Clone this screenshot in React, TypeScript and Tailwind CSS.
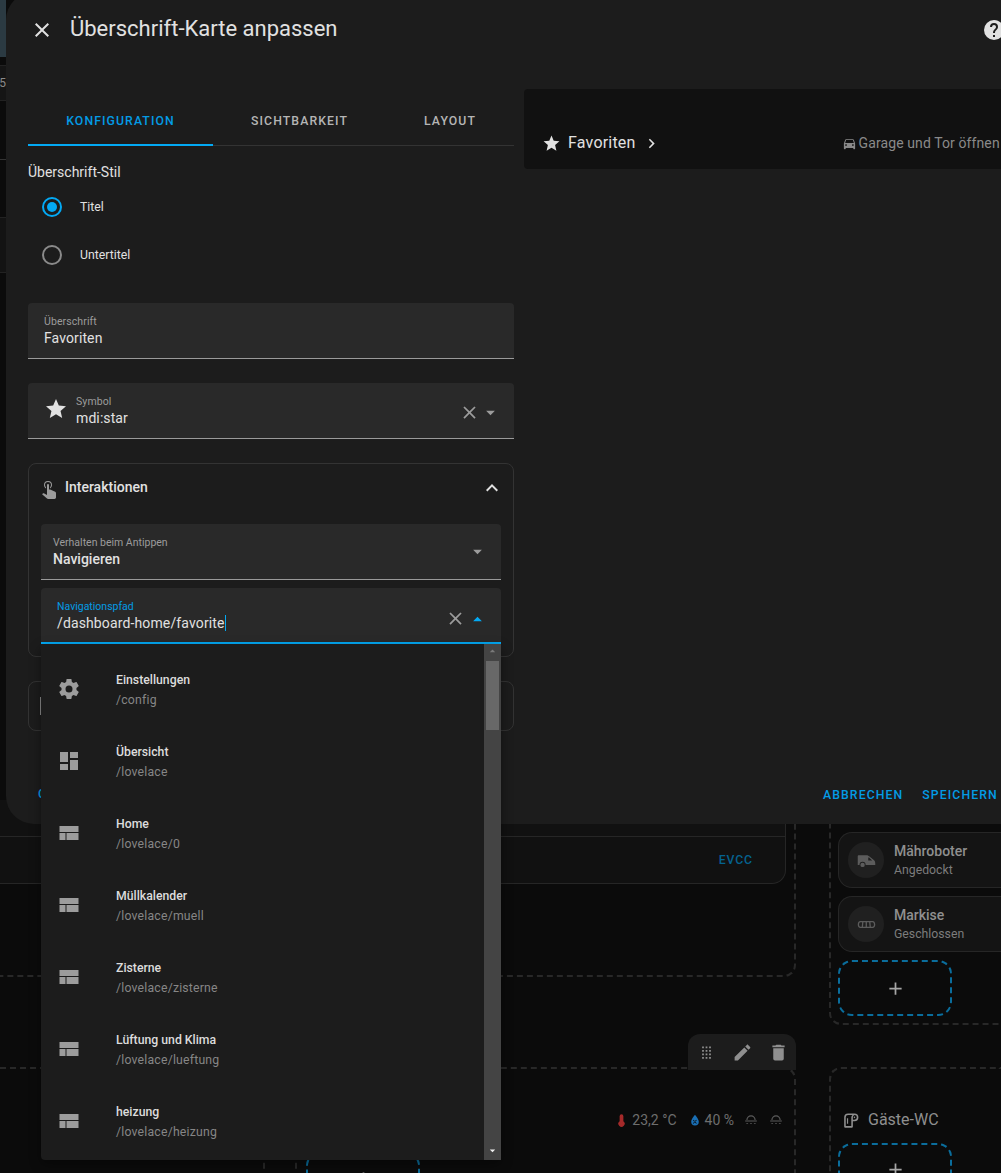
const path = {
  close: "M19,6.41L17.59,5L12,10.59L6.41,5L5,6.41L10.59,12L5,17.59L6.41,19L12,13.41L17.59,19L19,17.59L13.41,12L19,6.41Z",
  help: "M15.07,11.25L14.17,12.17C13.45,12.89 13,13.5 13,15H11V14.5C11,13.39 11.45,12.39 12.17,11.67L13.41,10.41C13.78,10.05 14,9.55 14,9C14,7.89 13.1,7 12,7A2,2 0 0,0 10,9H8A4,4 0 0,1 12,5A4,4 0 0,1 16,9C16,9.88 15.64,10.67 15.07,11.25M13,19H11V17H13M12,2A10,10 0 0,0 2,12A10,10 0 0,0 12,22A10,10 0 0,0 22,12C22,6.47 17.5,2 12,2Z",
  star: "M12,17.27L18.18,21L16.54,13.97L22,9.24L14.81,8.62L12,2L9.19,8.62L2,9.24L7.45,13.97L5.82,21L12,17.27Z",
  chevronRight: "M8.59,16.58L13.17,12L8.59,7.41L10,6L16,12L10,18L8.59,16.58Z",
  chevronUp: "M7.41,15.41L12,10.83L16.59,15.41L18,14L12,8L6,14L7.41,15.41Z",
  menuDown: "M7,10L12,15L17,10H7Z",
  menuUp: "M7,15L12,10L17,15H7Z",
  car: "M18.92 6.01C18.72 5.42 18.16 5 17.5 5h-11c-.66 0-1.21.42-1.42 1.01L3 12v8c0 .55.45 1 1 1h1c.55 0 1-.45 1-1v-1h12v1c0 .55.45 1 1 1h1c.55 0 1-.45 1-1v-8l-2.08-5.99zM6.5 16c-.83 0-1.5-.67-1.5-1.5S5.67 13 6.5 13s1.5.67 1.5 1.5S7.33 16 6.5 16zm11 0c-.83 0-1.5-.67-1.5-1.5s.67-1.5 1.5-1.5 1.5.67 1.5 1.5-.67 1.5-1.5 1.5zM5 11l1.5-4.5h11L19 11H5z",
  tap: "M10,9A1,1 0 0,1 11,8A1,1 0 0,1 12,9V13.47L13.21,13.6L18.15,15.79C18.68,16.03 19,16.56 19,17.14V21.5C18.97,22.32 18.32,22.97 17.5,23H11C10.62,23 10.26,22.85 10,22.57L5.1,18.37L5.84,17.6C6.03,17.39 6.3,17.28 6.58,17.28H6.8L10,19V9M11,5A4,4 0 0,1 15,9C15,10.5 14.2,11.77 13,12.46V11.24C13.61,10.69 14,9.89 14,9A3,3 0 0,0 11,6A3,3 0 0,0 8,9C8,9.89 8.39,10.69 9,11.24V12.46C7.8,11.77 7,10.5 7,9A4,4 0 0,1 11,5Z",
  cog: "M12,15.5A3.5,3.5 0 0,1 8.5,12A3.5,3.5 0 0,1 12,8.5A3.5,3.5 0 0,1 15.5,12A3.5,3.5 0 0,1 12,15.5M19.43,12.97C19.47,12.65 19.5,12.33 19.5,12C19.5,11.67 19.47,11.34 19.43,11L21.54,9.37C21.73,9.22 21.78,8.95 21.66,8.73L19.66,5.27C19.54,5.05 19.27,4.96 19.05,5.05L16.56,6.05C16.04,5.66 15.5,5.32 14.87,5.07L14.5,2.42C14.46,2.18 14.25,2 14,2H10C9.75,2 9.54,2.18 9.5,2.42L9.13,5.07C8.5,5.32 7.96,5.66 7.44,6.05L4.95,5.05C4.73,4.96 4.46,5.05 4.34,5.27L2.34,8.73C2.21,8.95 2.27,9.22 2.46,9.37L4.57,11C4.53,11.34 4.5,11.67 4.5,12C4.5,12.33 4.53,12.65 4.57,12.97L2.46,14.63C2.27,14.78 2.21,15.05 2.34,15.27L4.34,18.73C4.46,18.95 4.73,19.03 4.95,18.95L7.44,17.94C7.96,18.34 8.5,18.68 9.13,18.93L9.5,21.58C9.54,21.82 9.75,22 10,22H14C14.25,22 14.46,21.82 14.5,21.58L14.87,18.93C15.5,18.67 16.04,18.34 16.56,17.94L19.05,18.95C19.27,19.03 19.54,18.95 19.66,18.73L21.66,15.27C21.78,15.05 21.73,14.78 21.54,14.63L19.43,12.97Z",
  dashboard: "M13,3V9H21V3M13,21H21V11H13M3,21H11V15H3M3,13H11V3H3V13Z",
  panel: "M2.5,5H21.5V11H2.5ZM2.5,12H8.5V19H2.5ZM9.5,12H21.5V19H9.5Z",
  pencil: "M20.71,7.04C21.1,6.65 21.1,6 20.71,5.63L18.37,3.29C18,2.9 17.35,2.9 16.96,3.29L15.12,5.12L18.87,8.87M3,17.25V21H6.75L17.81,9.93L14.06,6.18L3,17.25Z",
  trash: "M19,4H15.5L14.5,3H9.5L8.5,4H5V6H19M6,19A2,2 0 0,0 8,21H16A2,2 0 0,0 18,19V7H6V19Z",
  plus: "M19,13H13V19H11V13H5V11H11V5H13V11H19V13Z",
  drag: "M7,19V17H9V19H7M11,19V17H13V19H11M15,19V17H17V19H15M7,15V13H9V15H7M11,15V13H13V15H11M15,15V13H17V15H15M7,11V9H9V11H7M11,11V9H13V11H11M15,11V9H17V11H15M7,7V5H9V7H7M11,7V5H13V7H11M15,7V5H17V7H15Z",
  mower: "M3,6H13L15,7L20,11C21.5,12 22,13.5 22,15V17H11A3.5,3.5 0 0,0 4,17H2V7C2,6.5 2.5,6 3,6ZM7.5,14.5A2.5,2.5 0 1,1 7.5,19.5A2.5,2.5 0 1,1 7.5,14.5ZM14,8.5V12H18.5L15,8.5Z",
  awning: "M5,8H19C21,8 22,10 22,12C22,14.5 21,16 19,16H5C3,16 2,14.5 2,12C2,10 3,8 5,8ZM5,9.5C4,9.5 3.5,11 3.5,12C3.5,13.5 4,14.5 5,14.5H6.5L7,9.5ZM8.5,9.5L8,14.5H11V9.5ZM12.5,9.5V14.5H15.5L15,9.5ZM16.5,9.5L17,14.5H19C20,14.5 20.5,13.5 20.5,12C20.5,11 20,9.5 19,9.5Z",
  thermometer: "M15,13V5A3,3 0 0,0 9,5V13A5,5 0 1,0 15,13Z",
  drop: "M12,3C12,3 5.5,10 5.5,15A6.5,6.5 0 0,0 18.5,15C18.5,10 12,3 12,3ZM9.5,11.5L15,17.5L14,18.5L8.5,12.5ZM14,11.5L15,12.5L9.5,18.5L8.5,17.5Z",
  dome: "M4,12A8,8 0 0,1 20,12H18A6,6 0 0,0 6,12ZM2,13H22V14.5H2ZM4,17H7V18.5H4ZM10.5,17H13.5V18.5H10.5ZM17,17H20V18.5H17Z",
  paper: "M9,3H17A5,5 0 0,1 22,8A5,5 0 0,1 17,13H15V20A1,1 0 0,1 14,21H5A1,1 0 0,1 4,20V8A5,5 0 0,1 9,3ZM9,5A3,3 0 0,0 6,8V19H13V8A5,5 0 0,1 14.5,5ZM17,5A3,3 0 0,0 15,8V11H17A3,3 0 0,0 17,5ZM17,7A1,1 0 1,1 17,9A1,1 0 1,1 17,7ZM7.5,9H9V16H7.5Z",
};

function Icon({ d, className }: { d: string; className?: string }) {
  return (
    <svg viewBox="0 0 24 24" fill="currentColor" fillRule="evenodd" className={className}>
      <path d={d} />
    </svg>
  );
}

const routes = [
  { icon: path.cog, name: "Einstellungen", url: "/config" },
  { icon: path.dashboard, name: "Übersicht", url: "/lovelace" },
  { icon: path.panel, name: "Home", url: "/lovelace/0" },
  { icon: path.panel, name: "Müllkalender", url: "/lovelace/muell" },
  { icon: path.panel, name: "Zisterne", url: "/lovelace/zisterne" },
  { icon: path.panel, name: "Lüftung und Klima", url: "/lovelace/lueftung" },
  { icon: path.panel, name: "heizung", url: "/lovelace/heizung" },
];

function AddButton({ className }: { className?: string }) {
  return (
    <div className={`flex w-[114px] shrink-0 items-center justify-center rounded-[14px] border-2 border-dashed border-[#0a6d9c] text-[#a6a6a6] ${className ?? ""}`}>
      <Icon d={path.plus} className="size-[21px]" />
    </div>
  );
}

function Tile({ icon, name, state }: { icon: string; name: string; state: string }) {
  return (
    <div className="flex h-[56px] items-center rounded-l-[14px] border border-r-0 border-[#262626] bg-[#141414] pl-[9px]">
      <div className="flex size-9 items-center justify-center rounded-full bg-[#202020] text-[#5c5c5c]">
        <Icon d={icon} className="size-[21px]" />
      </div>
      <div className="mt-px ml-[10px] leading-none">
        <div className="text-[14px] leading-[17px] font-medium text-[#8f8f8f]">{name}</div>
        <div className="mt-[2px] text-[12.25px] leading-[16px] text-[#7c7c7c]">{state}</div>
      </div>
    </div>
  );
}

function SideStrip() {
  return (
    <div className="absolute top-0 left-0 flex w-[6px] flex-col overflow-hidden">
      <div className="h-[57px] bg-[#2b3a42]" />
      <div className="h-[8px]" />
      <div className="flex h-[36px] items-center justify-end border-y border-[#222222] bg-[#151515] text-[12px] text-[#8a8a8a]">5</div>
      <div className="flex h-[116px] items-center">
        <div className="h-px w-full bg-[#333333]" />
      </div>
      <div className="h-[56px] border-y border-[#222222] bg-[#131313]" />
    </div>
  );
}

function Dashboard() {
  return (
    <div className="grid h-full grid-cols-[796px_1fr] grid-rows-[1025px_1fr] gap-x-[33px] gap-y-[42px]">
      <div className="h-[977px] rounded-br-[12px] border-r-2 border-b-2 border-dashed border-[#282828] pt-[800px] pr-[8px]">
        <div className="h-[84px] rounded-br-[14px] border-r border-b border-[#262626] bg-[#111111] pt-[36px]">
          <div className="flex h-[47px] items-center justify-end border-t border-[#262626] pr-[32px]">
            <span className="text-[12.25px] font-medium tracking-[0.9px] text-[#05628f]">EVCC</span>
          </div>
        </div>
      </div>
      <div className="flex flex-col rounded-bl-[12px] border-b-2 border-l-2 border-dashed border-[#282828] pb-[7px] pl-[7px]">
        <div className="mt-auto flex flex-col gap-[8px]">
          <Tile icon={path.mower} name="Mähroboter" state="Angedockt" />
          <Tile icon={path.awning} name="Markise" state="Geschlossen" />
          <AddButton className="h-[56px]" />
        </div>
      </div>
      <div className="relative rounded-tr-[12px] border-t-2 border-r-2 border-dashed border-[#282828]">
        <div className="absolute right-[-2px] bottom-[calc(100%-1px)] grid h-[36px] w-[108px] grid-cols-3 items-center justify-items-center rounded-t-[12px] bg-[#1c1c1c] text-[#8f8f8f]">
          <Icon d={path.drag} className="size-[21px]" />
          <Icon d={path.pencil} className="size-[21px]" />
          <Icon d={path.trash} className="size-[21px]" />
        </div>
        <div className="mt-[42px] flex items-center justify-end gap-[3px] pr-[11px] text-[14px] leading-[18px] text-[#6e6e6e]">
          <Icon d={path.thermometer} className="size-[15px] text-[#a52a2a]" />
          <span className="mr-[8px]">23,2 °C</span>
          <Icon d={path.drop} className="size-[14px] text-[#1a6fb5]" />
          <span className="mr-[7px]">40 %</span>
          <Icon d={path.dome} className="size-[14px] text-[#5c5c5c]" />
          <Icon d={path.dome} className="ml-[8px] size-[14px] text-[#5c5c5c]" />
        </div>
        <div className="mt-[23px] flex h-[60px] pl-[263px]">
          <div className="h-full w-[34px] border-x-2 border-dashed border-[#282828]" />
          <AddButton className="ml-[9px] h-[60px] items-start pt-[14px]" />
        </div>
      </div>
      <div className="rounded-tl-[12px] border-t-2 border-l-2 border-dashed border-[#282828] pl-[7px]">
        <div className="mt-[41px] flex items-center gap-[8px] pl-[3px] text-[16px] leading-[20px] text-[#8f8f8f]">
          <Icon d={path.paper} className="size-[19px]" />
          <span>Gäste-WC</span>
        </div>
        <AddButton className="mt-[13px] h-[60px] items-start pt-[14px]" />
      </div>
    </div>
  );
}

function Dialog() {
  return (
    <div className="absolute top-[-8px] left-[6px] flex h-[832px] w-[1040px] flex-col rounded-[28px] bg-[#1c1c1c] text-[#e1e1e1]">
      <div className="flex h-[37px] shrink-0 items-end pl-[24px]">
        <Icon d={path.close} className="mb-[-13px] size-6 text-[#e1e1e1]" />
        <h2 className="mb-[-14px] ml-[16px] text-[22px] leading-[28px] font-normal">Überschrift-Karte anpassen</h2>
        <Icon d={path.help} className="mb-[-13px] ml-[644px] size-[24px] text-[#e1e1e1]" />
      </div>

      <div className="mt-[52px] flex min-h-0 flex-1 pl-[22px]">
        <div className="w-[486px] shrink-0">
          <div className="mt-[17px] flex h-[48px] border-b border-[#333333] text-[12.25px] font-medium tracking-[1.09px]">
            <div className="flex h-[48px] w-[185px] items-center justify-center border-b-2 border-[#03a9f4] text-[#039be5]">KONFIGURATION</div>
            <div className="flex w-[173px] items-center justify-center text-[#b5b5b5]">SICHTBARKEIT</div>
            <div className="flex w-[128px] items-center justify-center text-[#b5b5b5]">LAYOUT</div>
          </div>

          <div className="mt-[16px] text-[14px] leading-[20px]">Überschrift-Stil</div>
          <div className="mt-[1px] flex h-[48px] items-center pl-[14px] text-[12.25px]">
            <span className="flex size-5 items-center justify-center rounded-full border-2 border-[#03a9f4]">
              <span className="size-[10px] rounded-full bg-[#03a9f4]" />
            </span>
            <span className="ml-[18px]">Titel</span>
          </div>
          <div className="flex h-[48px] items-center pl-[14px] text-[12.25px]">
            <span className="size-5 rounded-full border-2 border-[#8a8a8a]" />
            <span className="ml-[18px]">Untertitel</span>
          </div>

          <div className="mt-[24px] flex h-[56px] flex-col justify-center rounded-t border-b border-[#9a9a9a] bg-[#292929] pt-[2px] pl-[16px] tracking-[0.1px]">
            <div className="text-[10.5px] leading-[14px] text-[#9c9c9c]">Überschrift</div>
            <div className="text-[14px] leading-[19px]">Favoriten</div>
          </div>

          <div className="mt-[24px] flex h-[56px] items-center rounded-t border-b border-[#9a9a9a] bg-[#292929] pl-[16px]">
            <Icon d={path.star} className="mb-[4px] size-6 text-[#e1e1e1]" />
            <div className="ml-[8px] flex-1 pt-[2px] tracking-[0.1px]">
              <div className="text-[10.5px] leading-[14px] text-[#9c9c9c]">Symbol</div>
              <div className="text-[14px] leading-[19px]">mdi:star</div>
            </div>
            <Icon d={path.close} className="mt-[4px] size-[21px] text-[#9c9c9c]" />
            <Icon d={path.menuDown} className="mt-[4px] mr-[13px] size-[21px] text-[#9c9c9c]" />
          </div>

          <div className="mt-[24px] h-[194px] rounded-lg border border-[#333333] px-[12px]">
            <div className="flex h-[48px] items-center">
              <Icon d={path.tap} className="ml-[-4px] size-6 text-[#9c9c9c]" />
              <span className="mb-[2px] ml-[4px] text-[14px] leading-[20px] font-medium">Interaktionen</span>
              <Icon d={path.chevronUp} className="mr-[-3px] ml-auto size-6 text-[#e1e1e1]" />
            </div>
            <div className="mt-[12px] flex h-[56px] items-center rounded-t border-b border-[#9a9a9a] bg-[#292929] pl-[12px]">
              <div className="flex-1 pt-[2px]">
                <div className="text-[10.5px] leading-[14px] text-[#9c9c9c]">Verhalten beim Antippen</div>
                <div className="text-[14px] leading-[19px] font-medium">Navigieren</div>
              </div>
              <Icon d={path.menuDown} className="mr-[13px] size-[21px] text-[#9c9c9c]" />
            </div>
          </div>

          <div className="relative mt-[24px] h-[50px] rounded-lg border border-[#333333]">
            <div className="absolute top-[15px] left-[11px] h-[18px] w-px bg-[#8a8a8a]" />
          </div>
        </div>

        <div className="mt-[8px] ml-[10px] h-[80px] flex-1 rounded bg-[#111111] pr-[40px]">
          <div className="mt-[34px] flex h-[40px] items-center pl-[18px]">
            <Icon d={path.star} className="size-[19px] text-[#e1e1e1]" />
            <span className="ml-[7px] text-[16px] tracking-[0.2px]">Favoriten</span>
            <Icon d={path.chevronRight} className="ml-[6px] size-[19px] text-[#e1e1e1]" />
            <Icon d={path.car} className="ml-[181px] size-[15px] text-[#8a8a8a]" />
            <span className="ml-[2px] text-[14px] tracking-[0.1px] text-[#8a8a8a]">Garage und Tor öffnen</span>
          </div>
        </div>
      </div>

      <div className="flex h-[60px] shrink-0 items-start gap-[19px] pt-[22px] pl-[817px] text-[12.25px] font-medium tracking-[1.09px] text-[#039be5]">
        <span>ABBRECHEN</span>
        <span>SPEICHERN</span>
      </div>
      <span className="absolute bottom-[21px] left-[32px] text-[12.25px] font-medium tracking-[1.09px] text-[#039be5]">C</span>
    </div>
  );
}

function PathPicker() {
  return (
    <div className="absolute top-[588px] left-[41px] w-[460px] text-[#e1e1e1]">
      <div className="flex h-[56px] items-center rounded-t border-b-2 border-[#03a9f4] bg-[#292929] pl-[16px]">
        <div className="flex-1 pt-[2px]">
          <div className="text-[10.5px] leading-[14px] text-[#039be5]">Navigationspfad</div>
          <div className="text-[14px] leading-[19px] tracking-[0.13px]">
            /dashboard-home/favorite<span className="ml-[0.5px] inline-block h-[16px] w-px bg-[#03a9f4] align-[-3px]" />
          </div>
        </div>
        <Icon d={path.close} className="mt-[6px] size-[21px] text-[#9c9c9c]" />
        <Icon d={path.menuUp} className="mt-[6px] mr-[13px] ml-px size-[21px] text-[#03a9f4]" />
      </div>
      <div className="flex h-[516px] rounded-b bg-[#1c1c1c] shadow-[0_4px_12px_rgba(0,0,0,0.4)]">
        <div className="flex-1 overflow-hidden pt-[9px]">
          {routes.map((route) => (
            <div key={route.url} className="flex h-[72px] items-center pl-[16px]">
              <Icon d={route.icon} className="size-6 text-[#9c9c9c]" />
              <div className="ml-[35px] pt-px">
                <div className="text-[12.25px] leading-[18px] font-medium text-[#dcdcdc]">{route.name}</div>
                <div className="mt-[2px] text-[12.25px] leading-[18px] tracking-[0.2px] text-[#868686]">{route.url}</div>
              </div>
            </div>
          ))}
        </div>
        <div className="flex w-[17px] shrink-0 flex-col items-center bg-[#444444]">
          <Icon d={path.menuUp} className="size-[13px] text-[#7a7a7a]" />
          <div className="mt-[4px] h-[69px] w-[13px] bg-[#686868]" />
          <Icon d={path.menuDown} className="mt-auto mb-[3px] size-[13px] text-[#f0f0f0]" />
        </div>
      </div>
    </div>
  );
}

export default function App() {
  return (
    <div className="relative h-[1173px] w-[1001px] overflow-hidden bg-[#0b0b0b] font-['Roboto',sans-serif]">
      <Dashboard />
      <SideStrip />
      <Dialog />
      <PathPicker />
    </div>
  );
}
